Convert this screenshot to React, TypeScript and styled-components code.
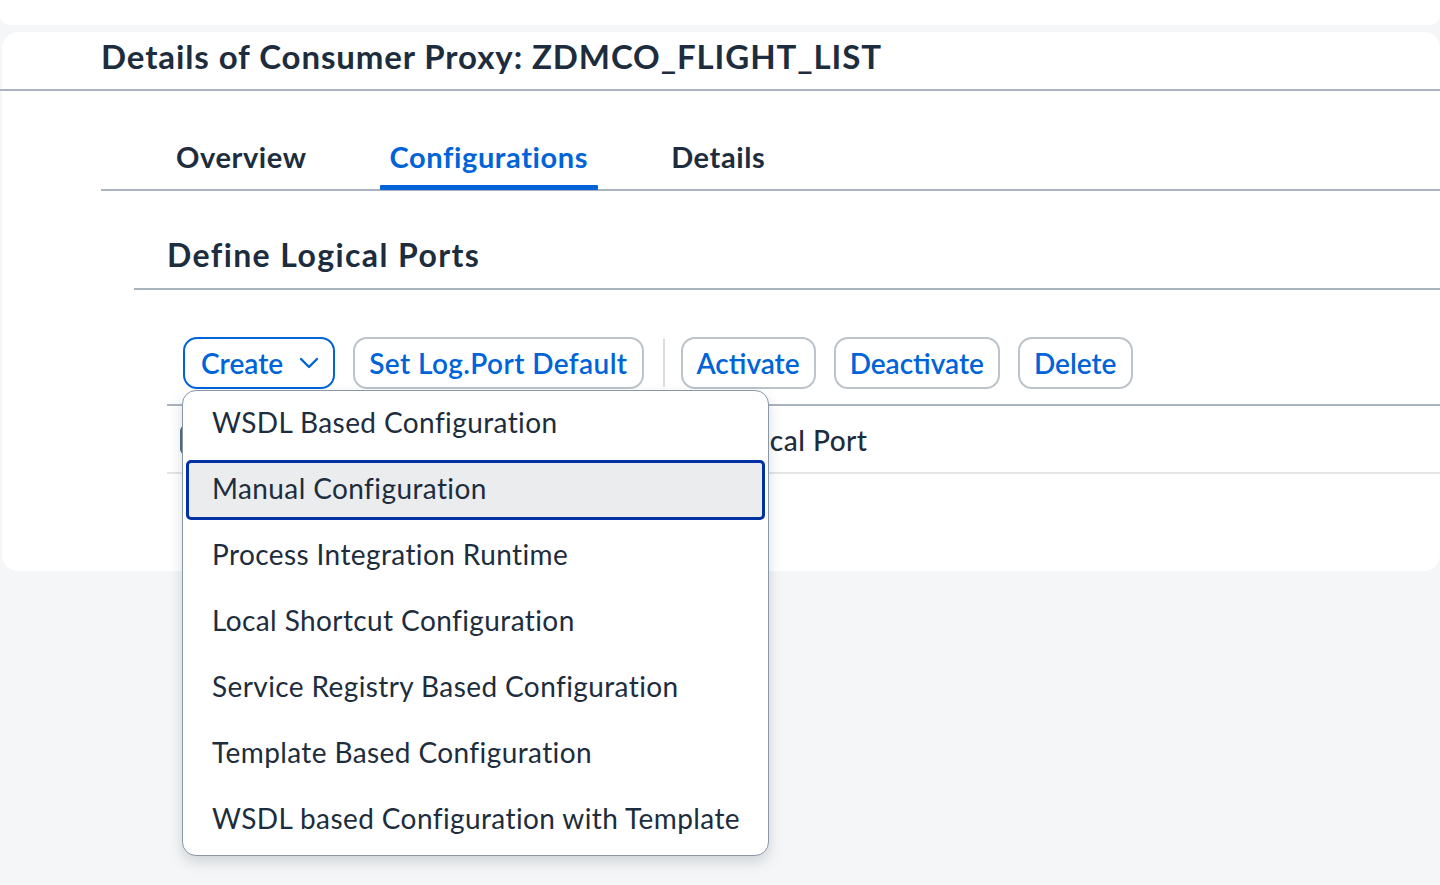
import React from 'react';
import styled, { createGlobalStyle } from 'styled-components';

const GlobalStyle = createGlobalStyle`
  html, body {
    margin: 0;
    padding: 0;
    background: #f5f6f7;
    font-family: Lato, "Noto Sans", Arial, sans-serif;
    color: #1d2d3e;
  }
  * {
    box-sizing: border-box;
  }
`;

const Page = styled.div`
  width: 1440px;
  height: 885px;
  overflow: hidden;
  background: #f5f6f7;
`;

const TopStrip = styled.div`
  height: 25px;
  background: #ffffff;
  border-radius: 0 0 10px 10px;
  margin-bottom: 7px;
`;

const Card = styled.div`
  margin-left: 2px;
  height: 539px;
  background: #ffffff;
  border-radius: 16px;
`;

const Header = styled.div`
  height: 59px;
  display: flex;
  align-items: center;
  padding-left: 101px;
  padding-bottom: 10px;
  border-bottom: 2px solid #aab4bf;
  margin-left: -2px;
`;

const Title = styled.h1`
  margin: 0;
  font-size: 33px;
  font-weight: 700;
  color: #1d2d3e;
  letter-spacing: 0.9px;
`;

const TabBar = styled.div`
  margin-left: 99px;
  margin-top: 46px;
  padding-left: 65px;
  display: flex;
  gap: 63px;
  border-bottom: 2px solid #aab4bf;
`;

const Tab = styled.div<{ active?: boolean }>`
  position: relative;
  padding: 0 10px 12px;
  font-size: 29px;
  font-weight: 700;
  letter-spacing: 0.6px;
  color: ${({ active }) => (active ? '#0064d9' : '#1d2d3e')};
  line-height: 40px;

  &::after {
    content: '';
    display: ${({ active }) => (active ? 'block' : 'none')};
    position: absolute;
    left: 0;
    right: 0;
    bottom: -1px;
    height: 5px;
    background: #0064d9;
    border-radius: 1px;
  }
`;

const Section = styled.div`
  margin-left: 132px;
`;

const SectionHeader = styled.div`
  height: 99px;
  display: flex;
  align-items: center;
  padding-left: 33px;
  padding-top: 30px;
  border-bottom: 2px solid #aab4bf;
`;

const SectionTitle = styled.h2`
  margin: 0;
  font-size: 32px;
  font-weight: 700;
  letter-spacing: 1.4px;
  color: #1d2d3e;
`;

const Toolbar = styled.div`
  display: flex;
  align-items: center;
  gap: 18px;
  padding-left: 49px;
  margin-top: 47px;
  height: 52px;
`;

const Button = styled.button<{ focused?: boolean; tracking?: number; lead?: number }>`
  height: 52px;
  padding: 0 14px 0 ${({ lead }) => lead ?? 14}px;
  display: flex;
  align-items: center;
  gap: 16px;
  background: #ffffff;
  border: 2px solid ${({ focused }) => (focused ? '#0064d9' : '#bcc3ca')};
  border-radius: 14px;
  color: #0064d9;
  font-family: inherit;
  font-size: 28px;
  font-weight: 600;
  letter-spacing: ${({ tracking }) => tracking ?? 0}px;
  cursor: pointer;
`;

const Separator = styled.div`
  width: 2px;
  height: 48px;
  margin: 0 -2px 0 1px;
  background: #d9dde1;
`;

const CreateWrap = styled.div`
  position: relative;
`;

const Menu = styled.ul`
  position: absolute;
  top: 53px;
  left: -1px;
  width: 587px;
  margin: 0;
  padding: 0 3px 2px;
  list-style: none;
  background: #ffffff;
  border: 1px solid #8a97a5;
  border-radius: 14px;
  box-shadow: 0 6px 14px rgba(34, 53, 72, 0.18);
  z-index: 10;
`;

const MenuItem = styled.li<{ selected?: boolean }>`
  display: flex;
  align-items: center;
  padding-left: ${({ selected }) => (selected ? '23px' : '26px')};
  padding-bottom: 4px;
  font-size: 28px;
  letter-spacing: 0.4px;
  color: #1d2d3e;
  background: ${({ selected }) => (selected ? '#eaecee' : 'transparent')};
  border: ${({ selected }) => (selected ? '3px solid #0032a5' : 'none')};
  border-radius: 5px;
  height: ${({ selected }) => (selected ? '60px' : '66px')};
  margin: ${({ selected }) => (selected ? '3px 0' : '0')};
`;

const Table = styled.div`
  margin-left: 33px;
  margin-top: 15px;
  border-top: 2px solid #aab4bf;
`;

const HeaderRow = styled.div`
  height: 68px;
  display: flex;
  align-items: center;
  padding-top: 2px;
  border-bottom: 2px solid #e5e5e5;
`;

const CheckCell = styled.div`
  width: 550px;
  padding-left: 13px;
  display: flex;
  align-items: center;
`;

const Checkbox = styled.div`
  width: 30px;
  height: 30px;
  border: 2px solid #556b82;
  border-radius: 6px;
`;

const HeaderCell = styled.div`
  font-size: 28px;
  font-weight: 500;
  letter-spacing: 0.5px;
  color: #1d2d3e;
`;

const Chevron = () => (
  <svg width="20" height="20" viewBox="0 0 20 20" fill="none">
    <path d="M2 6 L10 14 L18 6" stroke="#0064d9" strokeWidth="2.4" strokeLinecap="round" strokeLinejoin="round" />
  </svg>
);

const menuItems = [
  'WSDL Based Configuration',
  'Manual Configuration',
  'Process Integration Runtime',
  'Local Shortcut Configuration',
  'Service Registry Based Configuration',
  'Template Based Configuration',
  'WSDL based Configuration with Template',
];

export default function App() {
  return (
    <Page>
      <GlobalStyle />
      <TopStrip />
      <Card>
        <Header>
          <Title>Details of Consumer Proxy: ZDMCO_FLIGHT_LIST</Title>
        </Header>
        <TabBar>
          <Tab>Overview</Tab>
          <Tab active>Configurations</Tab>
          <Tab>Details</Tab>
        </TabBar>
        <Section>
          <SectionHeader>
            <SectionTitle>Define Logical Ports</SectionTitle>
          </SectionHeader>
          <Toolbar>
            <CreateWrap>
              <Button focused lead={16}>
                Create
                <Chevron />
              </Button>
              <Menu>
                {menuItems.map((item, i) => (
                  <MenuItem key={item} selected={i === 1}>
                    {item}
                  </MenuItem>
                ))}
              </Menu>
            </CreateWrap>
            <Button tracking={0.4}>Set Log.Port Default</Button>
            <Separator />
            <Button>Activate</Button>
            <Button>Deactivate</Button>
            <Button>Delete</Button>
          </Toolbar>
          <Table>
            <HeaderRow>
              <CheckCell>
                <Checkbox />
              </CheckCell>
              <HeaderCell>Logical Port</HeaderCell>
            </HeaderRow>
          </Table>
        </Section>
      </Card>
    </Page>
  );
}
